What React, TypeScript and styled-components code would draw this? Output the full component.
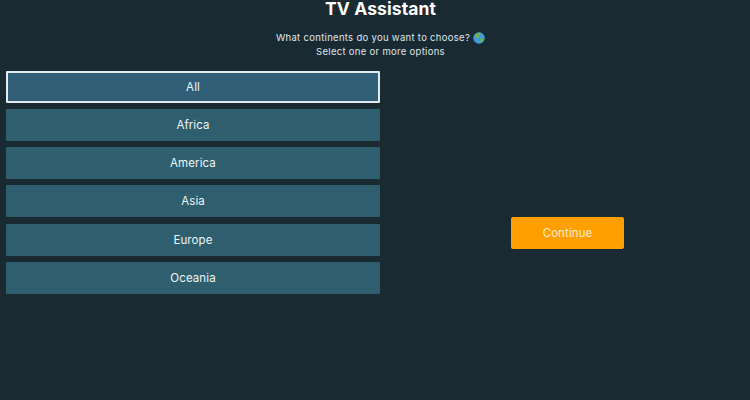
import { createGlobalStyle, styled } from "styled-components";

const GlobalStyle = createGlobalStyle`
	html, body {
		margin: 0;
		padding: 0;
		background-color: #1a2a33;
	}
	body {
		font-family: "Inter", "Liberation Sans", sans-serif;
		overflow: hidden;
	}
`;

const Page = styled.div`
	width: 750px;
	height: 400px;
	overflow: hidden;
	background-color: #1a2a33;
	color: #ffffff;
`;

const Header = styled.header`
	display: flex;
	flex-direction: column;
	align-items: center;
	height: 71px;
	padding-left: 11px;
`;

const Title = styled.h1`
	box-sizing: border-box;
	margin: 0;
	height: 31px;
	padding-top: 1px;
	font-size: 17.5px;
	line-height: 16px;
	font-weight: 700;
	letter-spacing: 0.1px;
	white-space: nowrap;
`;

const Subtitle = styled.p`
	display: flex;
	align-items: center;
	gap: 3px;
	margin: 0;
	height: 14px;
	font-size: 9.5px;
	line-height: 14px;
	letter-spacing: 0.3px;
	color: #dfe6e9;
`;

const Content = styled.main`
	display: flex;
	padding-left: 6px;
`;

const OptionList = styled.div`
	display: flex;
	flex-direction: column;
	flex-shrink: 0;
	gap: 6.15px;
	width: 374px;
`;

const Option = styled.button<{ $focused?: boolean }>`
	box-sizing: border-box;
	height: 32px;
	padding: 0;
	border: ${(p) => (p.$focused ? "2px solid #e4ebee" : "0")};
	border-radius: 1px;
	background-color: ${(p) => (p.$focused ? "#315f78" : "#2f5f6e")};
	color: #eef4f5;
	font-family: inherit;
	font-size: 11.5px;
	font-weight: 400;
	letter-spacing: 0.1px;
`;

const Aside = styled.div`
	display: flex;
	justify-content: center;
	align-items: flex-start;
	flex-shrink: 0;
	width: 375px;
	padding-top: 146px;
`;

const ContinueButton = styled.button`
	width: 113px;
	height: 32px;
	padding: 0 0 1px;
	border: 0;
	border-radius: 2px;
	background-color: #ffa000;
	color: #ffeccb;
	font-family: inherit;
	font-size: 11.5px;
	font-weight: 400;
	letter-spacing: 0.1px;
`;

const continents = ["All", "Africa", "America", "Asia", "Europe", "Oceania"];

function GlobeIcon() {
	return (
		<svg width="12" height="12" viewBox="0 0 12 12" aria-hidden="true">
			<circle cx="6" cy="6" r="5.8" fill="#3f9bd8" />
			<path d="M2.2 2.6 C3.6 1 6 0.6 7.4 1 L7.6 2.6 L6 3.4 L6.4 5 L4.8 6 L3.4 5.4 L2.2 4.4 Z" fill="#6db34a" />
			<path d="M6.6 6.4 L9 6 L10.6 7.2 L9.4 9.6 L7.8 10.6 L7.2 8.6 Z" fill="#6db34a" />
		</svg>
	);
}

export default function App() {
	return (
		<Page>
			<GlobalStyle />
			<Header>
				<Title>TV Assistant</Title>
				<Subtitle>
					What continents do you want to choose? <GlobeIcon />
				</Subtitle>
				<Subtitle>Select one or more options</Subtitle>
			</Header>
			<Content>
				<OptionList>
					{continents.map((name, i) => (
						<Option key={name} $focused={i === 0}>
							{name}
						</Option>
					))}
				</OptionList>
				<Aside>
					<ContinueButton>Continue</ContinueButton>
				</Aside>
			</Content>
		</Page>
	);
}
